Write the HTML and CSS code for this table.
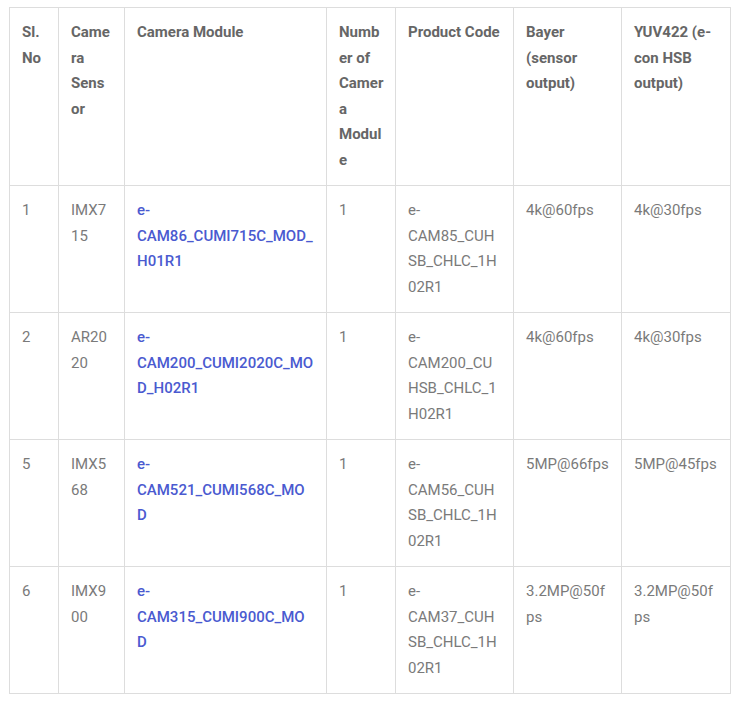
FILE: index.html
```html
<!DOCTYPE html>
<html>
<head>
<meta charset="utf-8">
<link rel="stylesheet" href="styles.css">
</head>
<body>
<div class="wrap">
<table class="spec">
<colgroup>
<col class="c1"><col class="c2"><col class="c3"><col class="c4"><col class="c5"><col class="c6"><col class="c7">
</colgroup>
<thead>
<tr>
<th>Sl. No</th>
<th>Camera Sensor</th>
<th>Camera Module</th>
<th class="narrow">Number of Camera Module</th>
<th>Product Code</th>
<th>Bayer (sensor output)</th>
<th>YUV422 (e-con HSB output)</th>
</tr>
</thead>
<tbody>
<tr>
<td>1</td><td>IMX715</td><td><a href="#">e-CAM86_CUMI715C_MOD_H01R1</a></td><td>1</td><td>e-CAM85_CUHSB_CHLC_1H02R1</td><td>4k@60fps</td><td>4k@30fps</td>
</tr>
<tr>
<td>2</td><td>AR2020</td><td><a href="#">e-CAM200_CUMI2020C_MOD_H02R1</a></td><td>1</td><td>e-CAM200_CUHSB_CHLC_1H02R1</td><td>4k@60fps</td><td>4k@30fps</td>
</tr>
<tr>
<td>5</td><td>IMX568</td><td><a href="#">e-CAM521_CUMI568C_MOD</a></td><td>1</td><td>e-CAM56_CUHSB_CHLC_1H02R1</td><td>5MP@66fps</td><td>5MP@45fps</td>
</tr>
<tr>
<td>6</td><td>IMX900</td><td><a href="#">e-CAM315_CUMI900C_MOD</a></td><td>1</td><td>e-CAM37_CUHSB_CHLC_1H02R1</td><td>3.2MP@50fps</td><td>3.2MP@50fps</td>
</tr>
</tbody>
</table>
</div>
</body>
</html>
```
FILE: styles.css
```css
html, body {
  margin: 0;
  padding: 0;
  background: #fff;
}
.wrap {
  padding: 7px 0 0 9px;
}
.spec {
  border-collapse: collapse;
  table-layout: fixed;
  width: 721px;
  font-family: Roboto, "Liberation Sans", sans-serif;
  font-size: 15px;
  line-height: 25.5px;
  color: #7a7a7a;
}
.c1 { width: 49px; }
.c2 { width: 66px; }
.c3 { width: 202px; }
.c4 { width: 69px; }
.c5 { width: 118px; }
.c6 { width: 108px; }
.c7 { width: 109px; }
.spec th, .spec td {
  border: 1px solid #ddd;
  padding: 12px 12px;
  text-align: left;
  vertical-align: top;
  overflow-wrap: break-word;
  word-wrap: break-word;
}
.spec th {
  font-weight: 700;
  color: #666;
}
.spec th.narrow {
  padding-right: 8px;
}
.spec td {
  font-weight: 400;
}
.spec a {
  color: #4a5ad0;
  text-decoration: none;
  font-weight: 500;
}
```
